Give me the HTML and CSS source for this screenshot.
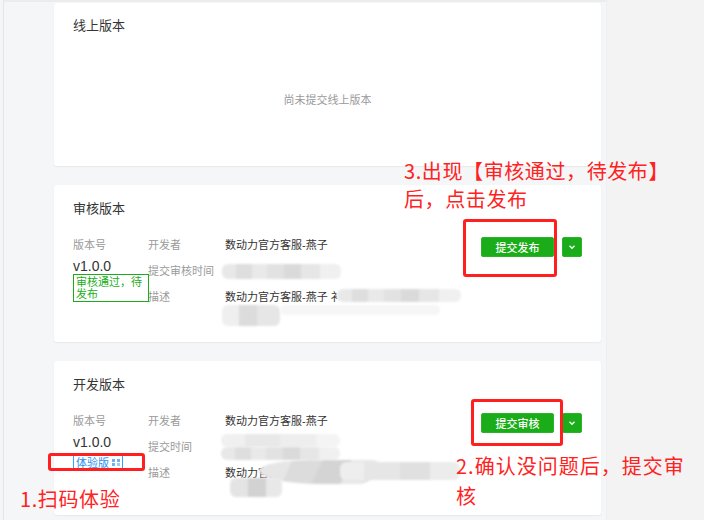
FILE: index.html
```html
<!DOCTYPE html>
<html lang="zh-CN">
<head>
  <meta charset="UTF-8" />
  <title>版本管理</title>
  <link rel="stylesheet" href="styles.css">
</head>
<body>
  <div class="page">
    <div class="rail"></div>

    <main class="main">
      <section class="card card-online">
        <h3 class="card-title">线上版本</h3>
        <p class="empty">尚未提交线上版本</p>
      </section>

      <section class="card card-review">
        <h3 class="card-title">审核版本</h3>
        <div class="card-body">
          <div class="ver">
            <div class="label">版本号</div>
            <div class="ver-num">v1.0.0</div>
            <div class="status">审核通过，待发布</div>
          </div>
          <dl class="meta">
            <dt>开发者</dt><dd>数动力官方客服-燕子</dd>
            <dt>提交审核时间</dt><dd></dd>
            <dt>描述</dt><dd>数动力官方客服-燕子 衤</dd>
          </dl>
          <div class="actions">
            <button class="btn">提交发布</button>
            <button class="btn btn-more">
              <svg width="10" height="10" viewBox="0 0 10 10"><path d="M2.5 3.8 L5 6.3 L7.5 3.8" fill="none" stroke="#fff" stroke-width="1.3"/></svg>
            </button>
          </div>
        </div>
      </section>

      <section class="card card-dev">
        <h3 class="card-title">开发版本</h3>
        <div class="card-body">
          <div class="ver">
            <div class="label">版本号</div>
            <div class="ver-num">v1.0.0</div>
            <div class="exp">体验版 <span class="qr"></span></div>
          </div>
          <dl class="meta">
            <dt>开发者</dt><dd>数动力官方客服-燕子</dd>
            <dt>提交时间</dt><dd></dd>
            <dt>描述</dt><dd>数动力官方客服-燕子 衤</dd>
          </dl>
          <div class="actions">
            <button class="btn">提交审核</button>
            <button class="btn btn-more">
              <svg width="10" height="10" viewBox="0 0 10 10"><path d="M2.5 3.8 L5 6.3 L7.5 3.8" fill="none" stroke="#fff" stroke-width="1.3"/></svg>
            </button>
          </div>
        </div>
      </section>
    </main>

    <aside class="side"></aside>

    <!-- mosaic over private data -->
    <div class="mosaic m1"></div>
    <div class="mosaic m2"></div>
    <div class="mosaic m3"></div>
    <div class="mosaic m3b"></div>
    <div class="mosaic m4"></div>
    <div class="mosaic m4b"></div>
    <div class="mosaic m5"></div>
    <div class="mosaic m5b"></div>
    <div class="mosaic m6"></div>

    <!-- annotations -->
    <div class="mark mark-publish"></div>
    <div class="mark mark-submit"></div>
    <div class="mark mark-exp"></div>
    <p class="note note-3">3.出现【审核通过，待发布】<br>后，点击发布</p>
    <p class="note note-2">2.确认没问题后，提交审<br>核</p>
    <p class="note note-1">1.扫码体验</p>
  </div>
</body>
</html>
```

FILE: styles.css
```css
* {
  box-sizing: border-box;
  margin: 0;
  padding: 0;
}

body {
  font-family: "Liberation Sans", "Noto Sans CJK SC", sans-serif;
  background: #f3f3f3;
  color: #333;
}

.page {
  position: relative;
  display: flex;
  height: 520px;
  overflow: hidden;
}

.rail {
  width: 4px;
  background: #f5f6f8;
  border-right: 1px solid #e4e5e7;
}

.main {
  width: 603px;
  display: flex;
  flex-direction: column;
  gap: 19px;
  padding: 3px 5px 5px 50px;
  background: #f5f6f8;
  border-top: 2px solid #eaecee;
  border-right: 1px solid #eeeff1;
}

.side {
  flex: 1;
  background: #f3f3f3;
}

.card {
  background: #fff;
  border-radius: 3px;
  padding: 14px 19px 0;
  box-shadow: 0 1px 2px rgba(0, 0, 0, 0.06);
}

.card-online {
  height: 163px;
  margin-top: -2px;
}

.card-review {
  height: 157px;
  padding-top: 15px;
}

.card-dev {
  flex: 1;
  padding-top: 15px;
}

.card-title {
  font-size: 13px;
  font-weight: normal;
  line-height: 18px;
  color: #353535;
}

.empty {
  margin-top: 57px;
  text-align: center;
  font-size: 11px;
  line-height: 16px;
  color: #9a9a9a;
}

.card-body {
  display: flex;
  margin-top: 14px;
}

.ver {
  width: 75px;
  flex-shrink: 0;
}

.label {
  font-size: 11px;
  line-height: 26px;
  color: #9a9a9a;
}

.ver-num {
  font-size: 14px;
  line-height: 16px;
  color: #333;
}

.status {
  width: 76px;
  border: 1px solid #1aad19;
  padding: 1px 2px;
  font-size: 11px;
  line-height: 12px;
  color: #1aad19;
  background: #fff;
  position: relative;
}

.exp {
  display: inline-flex;
  align-items: center;
  gap: 3px;
  margin-top: 6px;
  height: 12px;
  padding: 0 2px;
  border-left: 1px solid #3aa0f0;
  border-right: 1px solid #3aa0f0;
  font-size: 11px;
  color: #2a8ff0;
}

.qr {
  width: 8px;
  height: 7px;
  background:
    linear-gradient(90deg, #6ab4f2 0 3px, transparent 3px 5px, #6ab4f2 5px) top / 8px 3px no-repeat,
    linear-gradient(90deg, #6ab4f2 0 3px, transparent 3px 5px, #9ccbf5 5px) bottom / 8px 3px no-repeat;
}

.meta {
  display: grid;
  grid-template-columns: 77px 1fr;
  grid-auto-rows: 26px;
  width: 250px;
  font-size: 11px;
  line-height: 26px;
}

.meta dt {
  color: #9a9a9a;
  white-space: nowrap;
}

.meta dd {
  color: #333;
  white-space: nowrap;
}

.actions {
  display: flex;
  gap: 8px;
  margin: 5px 0 0 auto;
  align-self: flex-start;
}

.btn {
  height: 20px;
  width: 73px;
  border: 1px solid #2bb32a;
  border-radius: 2px;
  background: #1aad19;
  color: #fff;
  font-family: "Noto Sans CJK SC", sans-serif;
  font-size: 11px;
  font-weight: 500;
  line-height: 18px;
}

.btn-more {
  width: 20px;
  display: flex;
  align-items: center;
  justify-content: center;
}

/* mosaic patches */
.mosaic {
  position: absolute;
  border-radius: 6px;
  filter: blur(1px);
  background: linear-gradient(90deg, #e8e8e8 0 12%, #dedede 12% 25%, #e9e9e9 25% 38%, #e2e2e2 38% 52%, #dadada 52% 66%, #e6e6e6 66% 82%, #f0f0f0 82%);
}

.m1 { left: 222px; top: 264px; width: 119px; height: 15px; }
.m2 { left: 337px; top: 289px; width: 124px; height: 13px; }
.m3 { left: 222px; top: 305px; width: 58px; height: 21px; background: linear-gradient(90deg, #efefef 0 30%, #dcdcdc 30% 60%, #e6e6e6 60%); }
.m3b { left: 280px; top: 305px; width: 160px; height: 10px; background: #f6f6f6; }
.m4 { left: 221px; top: 434px; width: 119px; height: 13px; background: linear-gradient(90deg, #f0f0f0 0 20%, #e8e8e8 20% 50%, #eeeeee 50% 80%, #f4f4f4 80%); }
.m4b { left: 221px; top: 447px; width: 119px; height: 13px; }
.m5 { left: 258px; top: 460px; width: 118px; height: 24px; border-radius: 40% 10px 10px 60%; transform: skewX(-25deg); background: linear-gradient(90deg, #e6e6e6 0 25%, #dcdcdc 25% 50%, #d4d4d4 50% 75%, #e8e8e8 75%); }
.m5b { left: 340px; top: 462px; width: 120px; height: 18px; background: linear-gradient(90deg, #eeeeee 0 20%, #e6e6e6 20% 50%, #e0e0e0 50% 75%, #ececec 75%); }
.m6 { left: 230px; top: 478px; width: 52px; height: 19px; background: linear-gradient(90deg, #e4e4e4 0 35%, #d2d2d2 35% 70%, #e8e8e8 70%); }

/* annotations */
.mark {
  position: absolute;
  border: 3px solid #ff1f1f;
  border-radius: 3px;
}

.mark-publish { left: 463px; top: 219px; width: 94px; height: 58px; }
.mark-submit { left: 471px; top: 399px; width: 92px; height: 47px; }
.mark-exp { left: 48px; top: 453px; width: 97px; height: 18px; }

.note {
  position: absolute;
  font-family: "Noto Sans CJK SC", sans-serif;
  font-size: 20px;
  letter-spacing: 0.6px;
  color: #ff2222;
  white-space: nowrap;
}

.note-3 { left: 404px; top: 157px; line-height: 28px; }
.note-2 { left: 456px; top: 451px; line-height: 30px; letter-spacing: 1px; }
.note-1 { left: 20px; top: 485px; line-height: 28px; }
```
